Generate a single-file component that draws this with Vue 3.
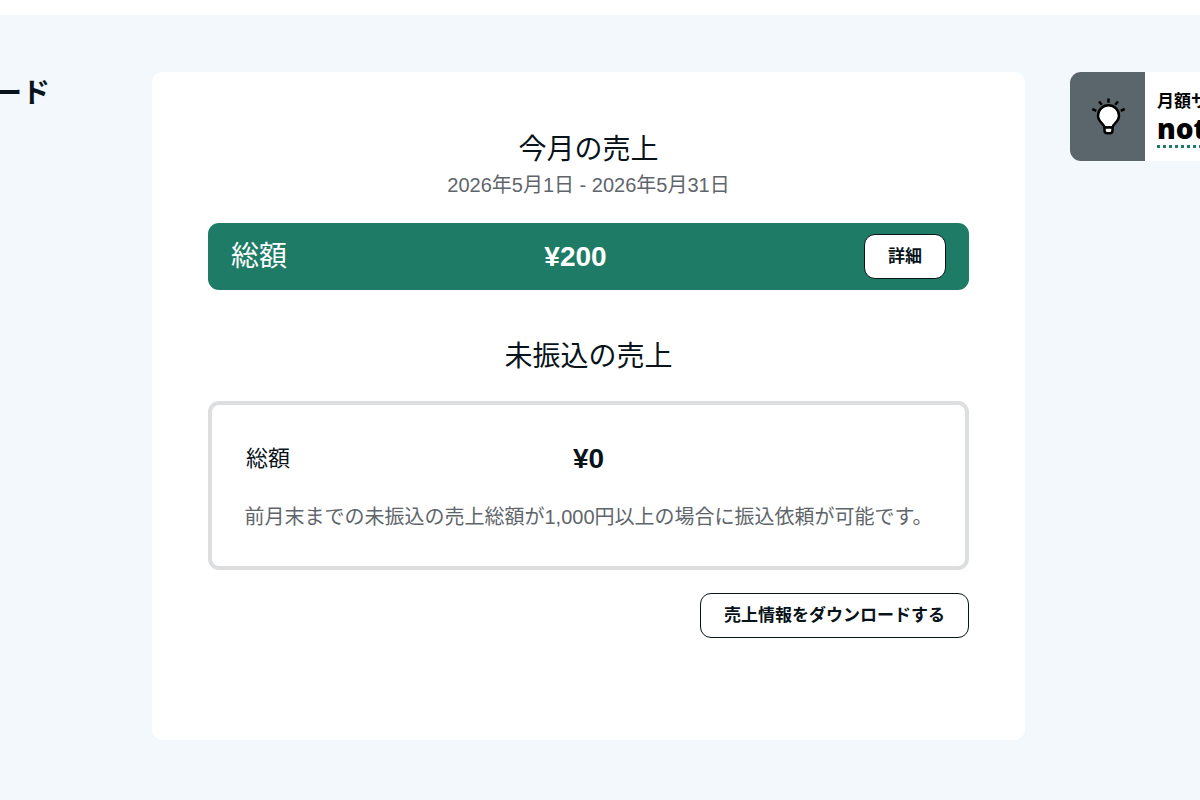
<script setup>
const period = '2026年5月1日 - 2026年5月31日'
const monthTotal = '¥200'
const unpaidTotal = '¥0'
</script>

<template>
  <div class="page">
    <header class="topbar"></header>
    <div class="columns">
      <aside class="side">
        <h1 class="side-title">ード</h1>
      </aside>

      <main class="card">
        <h2 class="title">今月の売上</h2>
        <p class="period">{{ period }}</p>
        <section class="month">
          <span class="month-label">総額</span>
          <strong class="amount">{{ monthTotal }}</strong>
          <button type="button" class="btn">詳細</button>
        </section>

        <h2 class="title unpaid-title">未振込の売上</h2>
        <section class="unpaid">
          <div class="unpaid-row">
            <span class="unpaid-label">総額</span>
            <strong class="amount">{{ unpaidTotal }}</strong>
          </div>
          <p class="note">前月末までの未振込の売上総額が1,000円以上の場合に振込依頼が可能です。</p>
        </section>

        <div class="actions">
          <button type="button" class="btn">売上情報をダウンロードする</button>
        </div>
      </main>

      <aside class="promo-column">
        <a href="#" class="promo">
          <span class="promo-icon">
            <svg viewBox="0 0 36 38" width="36" height="38" fill="none" stroke="#000" stroke-width="2.5" aria-hidden="true">
              <path d="M18.500 0.500v4.200M9 3.500l2.800 3.200M28 3.500l-2.800 3.200M2.300 11l4 1.800M34.700 11l-4 1.800" />
              <path fill="#fff" stroke-linejoin="round" d="M14.500 29.500c0-3.500-6.500-5.500-6.500-11.700a10.500 10.500 0 0 1 21 0C29 24 22.500 26 22.500 29.500z" />
              <path fill="#fff" stroke-linejoin="round" d="M14.500 29.500h8v3a2.800 2.800 0 0 1-2.800 2.800h-2.400a2.800 2.800 0 0 1-2.800-2.800z" />
            </svg>
          </span>
          <span class="promo-text">
            <span class="promo-small">月額サ</span>
            <span class="promo-big">not</span>
          </span>
        </a>
      </aside>
    </div>
  </div>
</template>

<style>
body {
  margin: 0;
  background: #f3f8fc;
}
</style>

<style scoped>
.page {
  min-height: 100vh;
  overflow: hidden;
  background: #f3f8fc;
  color: #08131a;
  font-family: "Liberation Sans", "Noto Sans CJK JP", sans-serif;
}
.topbar {
  height: 15px;
  background: #fff;
}
.columns {
  display: flex;
  align-items: flex-start;
  padding: 57px 0 60px;
}
h1, h2, p {
  margin: 0;
}
.side {
  flex: 0 0 152px;
  min-width: 0;
  box-sizing: border-box;
  padding: 1px 102px 0 0;
  display: flex;
  justify-content: flex-end;
}
.side-title {
  font-size: 28px;
  line-height: 42px;
  white-space: nowrap;
}
.card {
  flex: 1;
  min-width: 0;
  box-sizing: border-box;
  padding: 57px 56px 102px;
  border-radius: 11px;
  background: #fff;
}
.title {
  font-size: 28px;
  font-weight: 400;
  line-height: 42px;
  text-align: center;
}
.period {
  color: #5f666b;
  font-size: 20px;
  line-height: 29px;
  text-align: center;
}
.month {
  display: flex;
  align-items: center;
  justify-content: space-between;
  margin-top: 23px;
  padding: 11px 23px;
  border-radius: 11px;
  background: #1e7b65;
  color: #fff;
}
.month-label {
  font-size: 28px;
  line-height: 42px;
}
.amount {
  font-size: 28px;
  line-height: 42px;
}
.btn {
  box-sizing: border-box;
  height: 45px;
  padding: 0 23px 4px;
  border: 1px solid #08131a;
  border-radius: 11px;
  background: #fff;
  color: #08131a;
  font-family: inherit;
  font-size: 17px;
  font-weight: 700;
}
.unpaid-title {
  margin-top: 46px;
}
.unpaid {
  margin-top: 23px;
  padding: 33px 0 34px;
  border: 4px solid #dcdee0;
  border-radius: 11px;
}
.unpaid-row {
  display: grid;
  grid-template-columns: 1fr auto 1fr;
  align-items: center;
  padding: 0 34px;
}
.unpaid-label {
  font-size: 22px;
  line-height: 42px;
}
.note {
  margin-top: 23px;
  padding: 0 20px;
  color: #5f666b;
  font-size: 20px;
  line-height: 29px;
  text-align: center;
}
.actions {
  display: flex;
  justify-content: flex-end;
  margin-top: 23px;
}
.promo-column {
  flex: 0 0 130px;
  margin-left: 45px;
  overflow: hidden;
}
.promo {
  display: flex;
  height: 89px;
  border-radius: 11px 0 0 11px;
  overflow: hidden;
  background: #fff;
  color: #000;
  text-decoration: none;
}
.promo-icon {
  flex: 0 0 75px;
  display: flex;
  align-items: center;
  justify-content: center;
  background: #5b656c;
}
.promo-text {
  flex: none;
  display: flex;
  flex-direction: column;
  align-items: stretch;
  padding: 15px 0 0 12px;
  font-family: "Noto Sans CJK JP", sans-serif;
  font-weight: 700;
  white-space: nowrap;
}
.promo-small {
  font-size: 17px;
  line-height: 25px;
}
.promo-big {
  border-bottom: 3px dotted #1e7b65;
  font-family: "Noto Sans", "Noto Sans CJK JP", sans-serif;
  font-size: 28px;
  font-weight: 900;
  line-height: 33px;
}
</style>
